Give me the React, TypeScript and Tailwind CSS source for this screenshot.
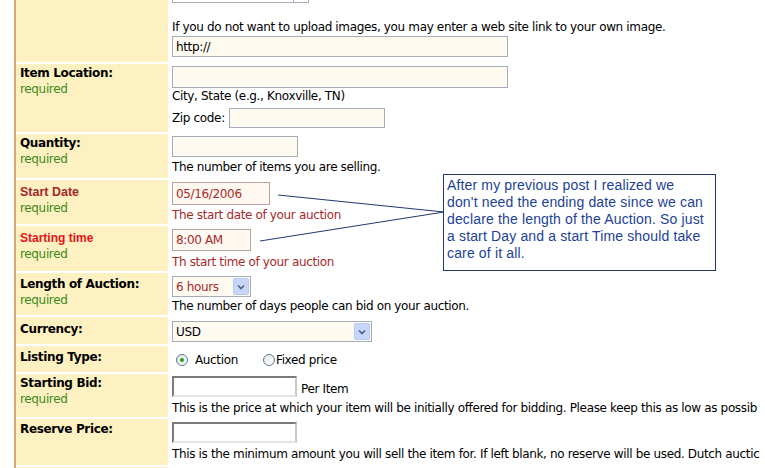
import type { ReactNode } from 'react'

const tahoma = "font-['DejaVu_Sans',sans-serif] text-[12px] tracking-[-0.35px]"

function Label({ children, red, pt, required = true }: { children: ReactNode; red?: 'dark' | 'bright'; pt: string; required?: boolean }) {
  const tone =
    red === 'dark'
      ? "font-['Liberation_Sans',sans-serif] text-[12.5px] tracking-normal text-[#a3282a]"
      : red === 'bright'
        ? "font-['Liberation_Sans',sans-serif] text-[12px] tracking-normal text-[#e8121a]"
        : 'text-black'
  return (
    <div className={`w-[152px] shrink-0 bg-[#fdf1c2] pl-[4px] ${pt}`}>
      <div className={`font-bold leading-4 ${tone}`}>{children}</div>
      {required && <div className="leading-4 text-[#3c8a1a]">required</div>}
    </div>
  )
}

function Input({ w, h = 'h-[21px]', value, tone = 'cream' }: { w: string; h?: string; value?: string; tone?: 'cream' | 'red' | 'inset' }) {
  const look =
    tone === 'red'
      ? 'border border-[#b9a3a0] bg-[#fff8f0] text-[#a52a2a]'
      : tone === 'inset'
        ? 'border-2 border-t-[#7b7b7b] border-l-[#7b7b7b] border-r-[#c9c9c9] border-b-[#e4e4e4] bg-white'
        : 'border border-[#a5aeb8] bg-[#fffaf0]'
  return <div className={`${w} ${h} ${look} flex items-center px-[3px] text-[12px]`}>{value}</div>
}

function Select({ w, value, red }: { w: string; value: string; red?: boolean }) {
  return (
    <div className={`${w} flex h-[21px] items-stretch border border-[#a5aeb8] bg-[#fffaf0] p-[1px]`}>
      <div className={`flex flex-1 items-center px-[2px] text-[12px] ${red ? 'text-[#a52a2a]' : 'text-black'}`}>{value}</div>
      <div className="flex w-[16px] items-center justify-center rounded-[2px] border border-[#b7c8f4] bg-[#c7d7fb]">
        <svg width="8" height="6" viewBox="0 0 8 6">
          <path d="M1 1.5 L4 4.5 L7 1.5" fill="none" stroke="#4d6185" strokeWidth="1.6" />
        </svg>
      </div>
    </div>
  )
}

function Radio({ on }: { on?: boolean }) {
  return (
    <span className="flex h-[12px] w-[12px] items-center justify-center rounded-full border border-[#5a7aa0] bg-gradient-to-br from-[#e4e4e0] to-white">
      {on && <span className="h-[4px] w-[4px] rounded-full bg-[#21a121]" />}
    </span>
  )
}

function Row({ h, children }: { h: string; children: ReactNode }) {
  return <div className={`flex ${h} shrink-0`}>{children}</div>
}

const note = [
  'After my previous post I realized we',
  "don't need the ending date since we can",
  'declare the length of the Auction. So just',
  'a start Day and a start Time should take',
  'care of it all.',
]

export default function App() {
  return (
    <div className={`relative h-[468px] w-[765px] overflow-hidden bg-white ${tahoma}`}>
      <div className="flex h-full">
        <div className="w-[14px] shrink-0 bg-[#fffdf8]" />
        <div className="w-[2px] shrink-0 bg-[#d8a67c]" />
        <div className="flex flex-1 flex-col gap-[2px] whitespace-nowrap">
          <Row h="h-[62px]">
            <Label pt="pt-0" required={false}>{''}</Label>
            <div className="flex flex-col pl-[4px]">
              <div className="flex h-[3px] w-[137px] border-x border-b border-[#a5aeb8]">
                <div className="flex-1" />
                <div className="w-[15px] border-l border-[#a5aeb8]" />
              </div>
              <div className="mt-[16px] leading-4">If you do not want to upload images, you may enter a web site link to your own image.</div>
              <div className="mt-[1px]">
                <Input w="w-[336px]" value="http://" />
              </div>
            </div>
          </Row>

          <Row h="h-[68px]">
            <Label pt="pt-[1px]">Item Location:</Label>
            <div className="flex flex-col pl-[4px] pt-[2px]">
              <Input w="w-[336px]" h="h-[22px]" />
              <div className="leading-4">City, State (e.g., Knoxville, TN)</div>
              <div className="mt-[4px] flex items-center gap-[4px]">
                <span>Zip code:</span>
                <Input w="w-[156px]" h="h-[20px]" />
              </div>
            </div>
          </Row>

          <Row h="h-[44px]">
            <Label pt="pt-[1px]">Quantity:</Label>
            <div className="flex flex-col pl-[4px] pt-[2px]">
              <Input w="w-[126px]" />
              <div className="mt-[2px] leading-4">The number of items you are selling.</div>
            </div>
          </Row>

          <Row h="h-[44px]">
            <Label pt="pt-[4px]" red="dark">Start Date</Label>
            <div className="flex flex-col pl-[4px] pt-[2px]">
              <Input w="w-[98px]" h="h-[23px]" value="05/16/2006" tone="red" />
              <div className="mt-[2px] leading-4 text-[#a52a2a]">The start date of your auction</div>
            </div>
          </Row>

          <Row h="h-[45px]">
            <Label pt="pt-[4px]" red="bright">Starting time</Label>
            <div className="flex flex-col pl-[4px] pt-[3px]">
              <Input w="w-[79px]" h="h-[22px]" value="8:00 AM" tone="red" />
              <div className="mt-[3px] leading-4 text-[#a52a2a]">Th start time of your auction</div>
            </div>
          </Row>

          <Row h="h-[42px]">
            <Label pt="pt-[3px]">Length of Auction:</Label>
            <div className="flex flex-col pl-[4px] pt-[3px]">
              <Select w="w-[79px]" value="6 hours" red />
              <div className="mt-[1px] leading-4">The number of days people can bid on your auction.</div>
            </div>
          </Row>

          <Row h="h-[27px]">
            <Label pt="pt-[4px]" required={false}>Currency:</Label>
            <div className="pl-[4px] pt-[4px]">
              <Select w="w-[200px]" value="USD" />
            </div>
          </Row>

          <Row h="h-[26px]">
            <Label pt="pt-[3px]" required={false}>Listing Type:</Label>
            <div className="flex items-center pl-[8px] pt-[2px]">
              <Radio on />
              <span className="ml-[7px]">Auction</span>
              <span className="ml-[25px]">
                <Radio />
              </span>
              <span className="ml-[1px]">Fixed price</span>
            </div>
          </Row>

          <Row h="h-[43px]">
            <Label pt="pt-[1px]">Starting Bid:</Label>
            <div className="flex flex-col pl-[4px] pt-[2px]">
              <div className="flex items-end gap-[4px]">
                <Input w="w-[125px]" tone="inset" />
                <span className="leading-4">Per Item</span>
              </div>
              <div className="mt-[3px] leading-4">
                This is the price at which your item will be initially offered for bidding. Please keep this as low as possib
              </div>
            </div>
          </Row>

          <Row h="h-[46px]">
            <Label pt="pt-[2px]" required={false}>Reserve Price:</Label>
            <div className="flex flex-col pl-[4px] pt-[3px]">
              <Input w="w-[125px]" tone="inset" />
              <div className="mt-[3px] leading-4">
                This is the minimum amount you will sell the item for. If left blank, no reserve will be used. Dutch auctic
              </div>
            </div>
          </Row>

          <Row h="h-[20px]">
            <Label pt="pt-0" required={false}>{''}</Label>
          </Row>
        </div>
      </div>

      <svg className="pointer-events-none absolute left-0 top-0" width="765" height="468">
        <path d="M278 195 L444 212" stroke="#1f3a6e" strokeWidth="1" fill="none" />
        <path d="M260 241 L444 212" stroke="#1f3a6e" strokeWidth="1" fill="none" />
      </svg>

      <div className="absolute left-[443px] top-[174px] flex h-[97px] w-[273px] flex-col border border-[#1f3a6e] bg-white pl-[3px] pt-[2px] font-['Liberation_Sans',sans-serif] text-[14px] leading-[17px] tracking-[0.15px] text-[#1d3f96]">
        {note.map((line) => (
          <span key={line} className="whitespace-nowrap">
            {line}
          </span>
        ))}
      </div>
    </div>
  )
}
